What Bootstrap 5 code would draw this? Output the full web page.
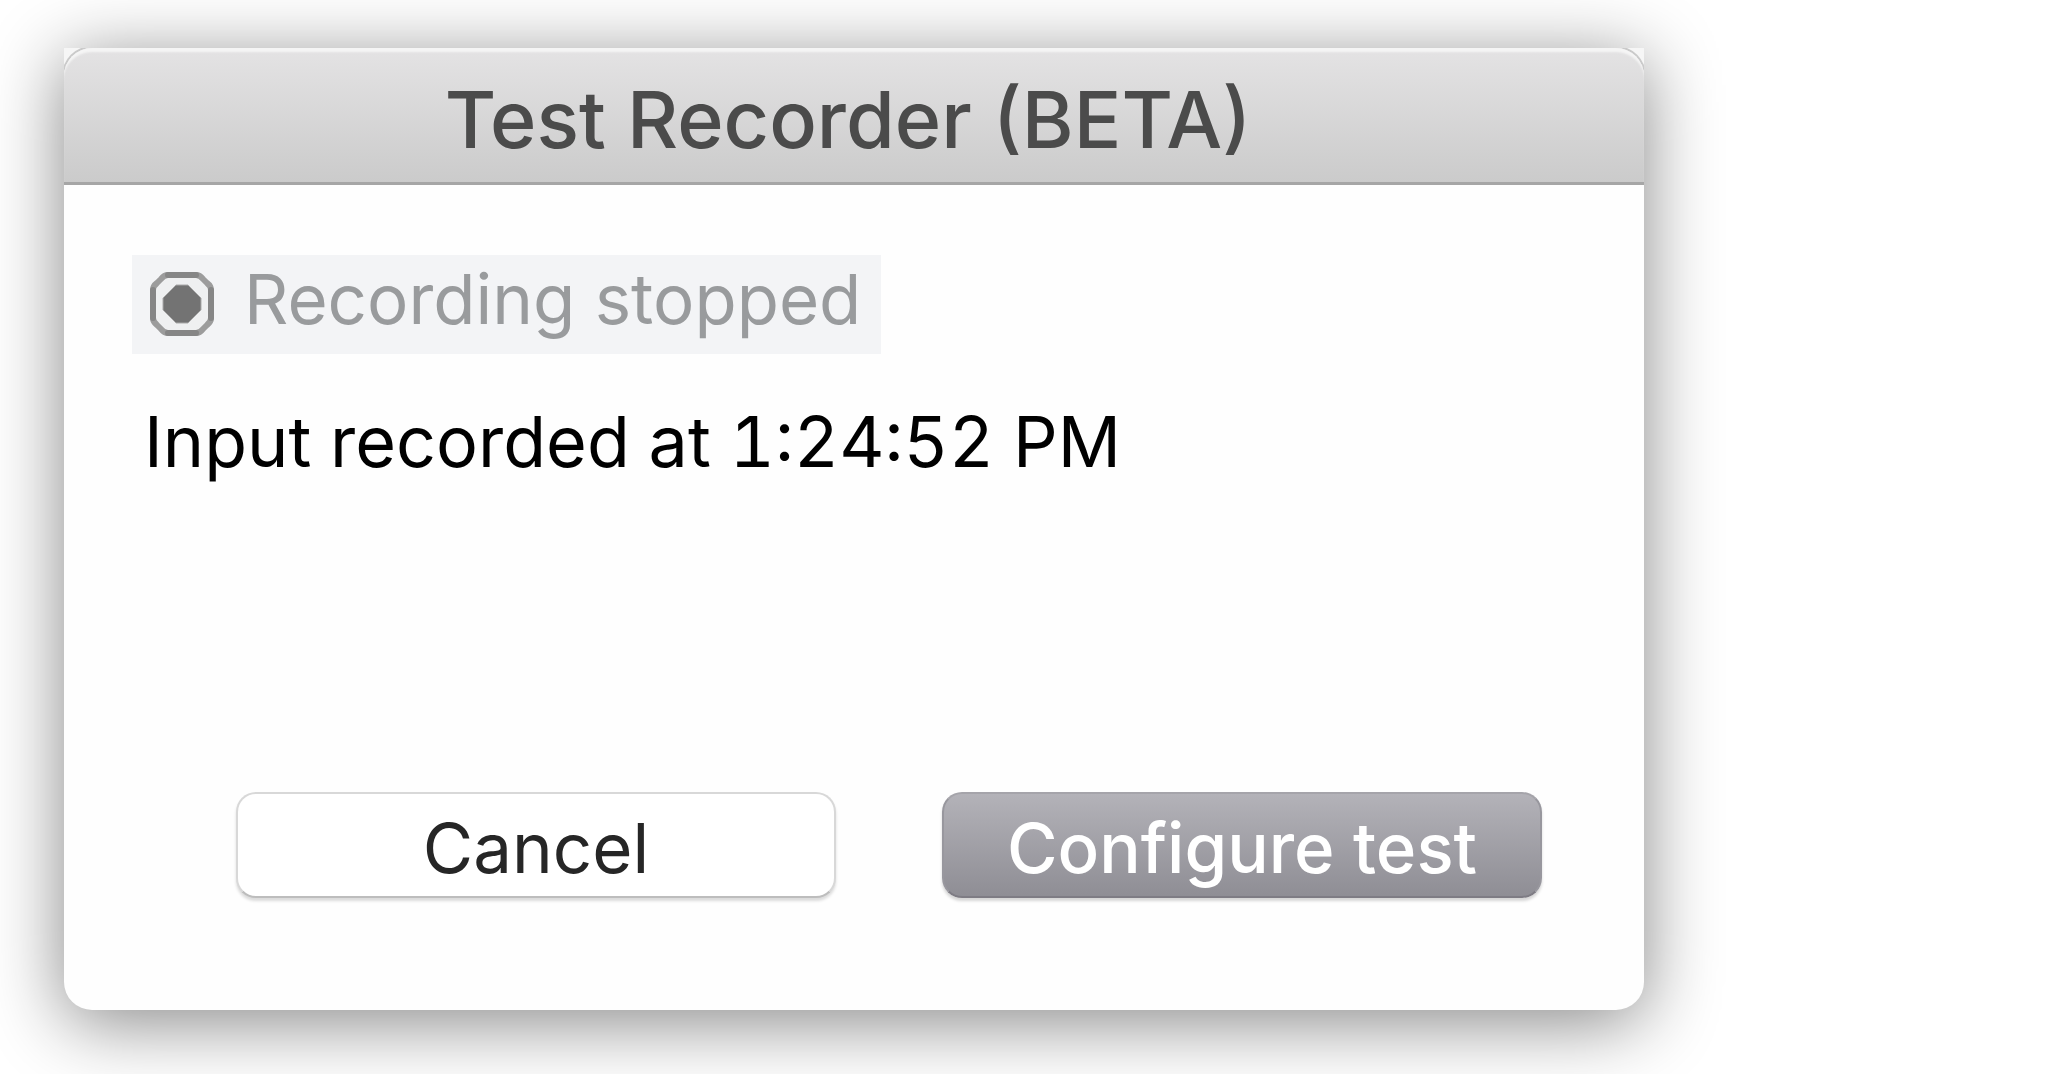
<!DOCTYPE html>
<html lang="en">
<head>
<meta charset="utf-8">
<meta name="viewport" content="width=device-width, initial-scale=1">
<title>Test Recorder (BETA)</title>
<link href="https://cdn.jsdelivr.net/npm/bootstrap@5.3.0/dist/css/bootstrap.min.css" rel="stylesheet">
<style>
body { background: #fff; font-family: Inter, "Liberation Sans", sans-serif; font-size: 69px; line-height: 80px; color: #000; }
.stage { padding: 48px 64px 64px; }
.recorder { max-width: 1580px; background: #fefefe; border-radius: 0 0 28px 28px; box-shadow: 0 12px 74px rgba(0,0,0,.48); }
.title-wrap { background: #f6f6f6; overflow: hidden; }
.title-bar { padding: 31px 44px 23px 32px; border-bottom: 3px solid #a6a6a6; border-radius: 28px 28px 0 0;
  background: linear-gradient(#e4e3e4, #cbcbcb); box-shadow: inset 0 5px 2px -1px #f5f5f5, 0 0 0 2px #cacaca; }
.title-bar h1 { font-size: 79px; line-height: 80px; font-weight: 500; color: #4b4b4b; }
.window-body { padding: 70px 102px 112px 68px; }
.status { background: #f3f4f6; color: #999b9d; padding: 4px 20px 15px 16px; gap: 28px; }
.status svg { width: 68px; height: 68px; position: relative; top: 5px; }
.message { padding: 48px 0 0 12px; font-size: 70px; font-variant-numeric: tabular-nums; }
.actions { padding: 310px 0 0 104px; gap: 106px; }
.action { font-size: 69px; line-height: 80px; padding: 14px 8px 8px; border-radius: 20px; border: 2px solid #d4d4d4; }
.btn-plain, .btn-plain:hover { background: #fff; color: #262626; border-color: #d8d8d8 #d8d8d8 #bdbdbd; box-shadow: 0 3px 3px rgba(0,0,0,.14); }
.btn-main, .btn-main:hover { color: #fff; font-weight: 500; border-color: #a5a4aa #98979e #7e7c84; background: linear-gradient(#b4b3b9, #8e8d94) border-box; box-shadow: 0 3px 3px rgba(0,0,0,.16); }
</style>
</head>
<body>
<main class="stage">
  <section class="recorder" role="dialog" aria-labelledby="dialog-title">
    <header class="title-wrap">
      <div class="title-bar text-center">
        <h1 class="m-0" id="dialog-title">Test Recorder (BETA)</h1>
      </div>
    </header>
    <div class="window-body">
      <div class="status d-inline-flex align-items-center align-top" role="status">
        <svg viewBox="0 0 68 68" aria-hidden="true">
          <path d="M20 5H48Q52 5 55 9L59 13Q63 16 63 20V48Q63 52 59 55L55 59Q52 63 48 63H20Q16 63 13 59L9 55Q5 52 5 48V20Q5 16 9 13L13 9Q16 5 20 5Z" fill="#eff0f1" stroke="#9c9c9c" stroke-width="6" stroke-linejoin="round"/>
          <path d="M20 5H48M20 63H48M5 20V48M63 20V48" stroke="#868686" stroke-width="6" stroke-linecap="round"/>
          <path d="M28 15H40L53 28V40L40 53H28L15 40V28Z" fill="#737373" stroke="#aaa" stroke-width="1" stroke-linejoin="round"/>
        </svg>
        <span>Recording stopped</span>
      </div>
      <p class="message m-0">Input recorded at 1:24:52 PM</p>
      <div class="actions d-flex">
        <button type="button" class="btn action btn-plain flex-fill w-100">Cancel</button>
        <button type="button" class="btn action btn-main flex-fill w-100 text-nowrap">Configure test</button>
      </div>
    </div>
  </section>
</main>
<script src="https://cdn.jsdelivr.net/npm/bootstrap@5.3.0/dist/js/bootstrap.bundle.min.js"></script>
</body>
</html>
